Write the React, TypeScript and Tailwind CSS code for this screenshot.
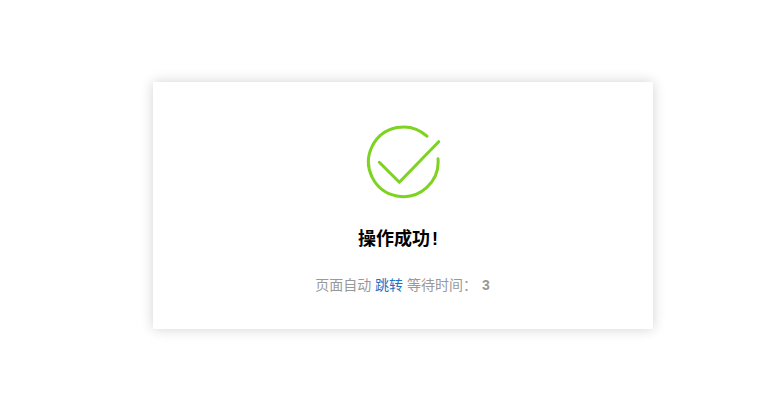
export default function App() {
  return (
    <div className="min-h-[405px] bg-white pt-[82px] font-['Liberation_Sans','Noto_Sans_CJK_SC',sans-serif]">
      <div className="ml-[153px] flex h-[247px] w-[500px] flex-col items-center bg-white pt-10 shadow-[0_0_12px_rgba(0,0,0,0.18)]">
        {/* Success icon */}
        <svg width="80" height="80" viewBox="0 0 80 80" fill="none" stroke="#7ed321" strokeWidth="3" strokeLinecap="round" strokeLinejoin="round">
          <path d="M63.9 14.2A34.8 34.8 0 1 0 75 36.8" />
          <path d="M16.3 40.3L36.3 60.3L75.7 19.7" />
        </svg>
        <h1 className="mt-6 pr-[10px] text-lg leading-[26px] font-bold text-black">
          操作成功<span className="ml-[2px]">!</span>
        </h1>
        <p className="mt-[23px] pr-[1px] text-sm leading-5 text-[#999999]">
          页面自动 <a className="text-[#1f72c4]">跳转</a> 等待时间：
          <b className="ml-[5px]">3</b>
        </p>
      </div>
    </div>
  )
}
